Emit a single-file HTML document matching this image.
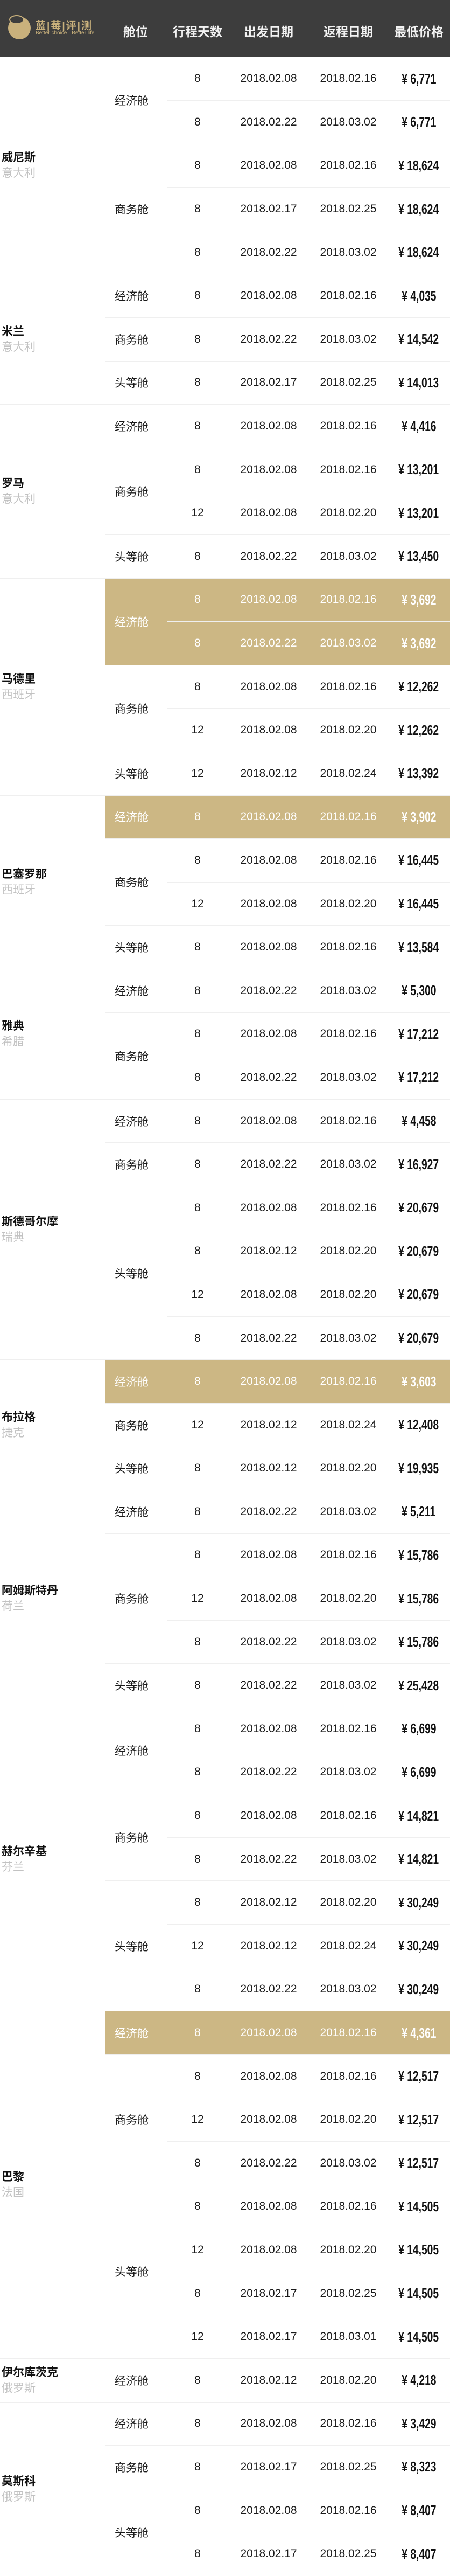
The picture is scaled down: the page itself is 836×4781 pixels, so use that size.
<!DOCTYPE html>
<html><head><meta charset="utf-8">
<style>
*{margin:0;padding:0;box-sizing:border-box}
body{width:836px;height:4781px;background:#fff;font-family:"Liberation Sans","Noto Sans CJK SC",sans-serif;overflow:hidden}
.hd{height:106px;background:#3d3d3d;position:relative;color:#fff}
.hd .lg{position:absolute;left:15px;top:31px;width:42px;height:42px;border-radius:50%;background:#c9b17c}
.hd .lg:after{content:"";position:absolute;left:2px;top:-3px;width:24px;height:13px;border-radius:50%;background:#3d3d3d;border:2px solid #c9b17c}
.hd .bt{position:absolute;left:66px;top:33px;font-size:19px;color:#c9b17c;font-weight:bold;letter-spacing:2px;white-space:nowrap}
.hd .bs{position:absolute;left:66px;top:56px;font-size:10px;color:#c9b17c;white-space:nowrap}
.hd .h{position:absolute;top:40px;font-size:23px;font-weight:bold;transform:translateX(-50%);white-space:nowrap;color:#f2f2f2}
table{border-collapse:collapse;table-layout:fixed;width:836px}
td{border-top:1px solid #efefef;height:80.6px;vertical-align:middle;font-size:21px;color:#1a1a1a}
tr:first-child td{border-top:none}
td.c{padding-left:3px;line-height:29px}
td.c b{display:block;font-size:21px;color:#111}
td.c i{display:block;font-style:normal;color:#c2c2c2;font-size:21px}
td.k{padding-left:18px}
td.n,td.t,td.p{text-align:center}
td.p span{display:inline-block;font-weight:bold;font-size:26px;transform:scaleX(0.74);white-space:nowrap;color:#111}
tr.h td.k,tr.h td.n,tr.h td.t,tr.h td.p,td.k.h{background:#ccb784;color:#fff}
tr.h td.p span{color:#fff}
</style></head><body>
<div class="hd">
<div class="lg"></div>
<div class="bt">蓝|莓|评|测</div>
<div class="bs">Better choice · Better life</div>
<div class="h" style="left:252px">舱位</div>
<div class="h" style="left:367px">行程天数</div>
<div class="h" style="left:499px">出发日期</div>
<div class="h" style="left:647px">返程日期</div>
<div class="h" style="left:778px">最低价格</div>
</div>
<table>
<colgroup><col style="width:195px"><col style="width:115px"><col style="width:114px"><col style="width:150px"><col style="width:146px"><col style="width:116px"></colgroup>
<!-- Venice -->
<tr><td class="c" rowspan="5"><b>威尼斯</b><i>意大利</i></td><td class="k" rowspan="2">经济舱</td><td class="n">8</td><td class="t">2018.02.08</td><td class="t">2018.02.16</td><td class="p"><span>¥ 6,771</span></td></tr>
<tr><td class="n">8</td><td class="t">2018.02.22</td><td class="t">2018.03.02</td><td class="p"><span>¥ 6,771</span></td></tr>
<tr><td class="k" rowspan="3">商务舱</td><td class="n">8</td><td class="t">2018.02.08</td><td class="t">2018.02.16</td><td class="p"><span>¥ 18,624</span></td></tr>
<tr><td class="n">8</td><td class="t">2018.02.17</td><td class="t">2018.02.25</td><td class="p"><span>¥ 18,624</span></td></tr>
<tr><td class="n">8</td><td class="t">2018.02.22</td><td class="t">2018.03.02</td><td class="p"><span>¥ 18,624</span></td></tr>
<!-- Milan -->
<tr><td class="c" rowspan="3"><b>米兰</b><i>意大利</i></td><td class="k">经济舱</td><td class="n">8</td><td class="t">2018.02.08</td><td class="t">2018.02.16</td><td class="p"><span>¥ 4,035</span></td></tr>
<tr><td class="k">商务舱</td><td class="n">8</td><td class="t">2018.02.22</td><td class="t">2018.03.02</td><td class="p"><span>¥ 14,542</span></td></tr>
<tr><td class="k">头等舱</td><td class="n">8</td><td class="t">2018.02.17</td><td class="t">2018.02.25</td><td class="p"><span>¥ 14,013</span></td></tr>
<!-- Rome -->
<tr><td class="c" rowspan="4"><b>罗马</b><i>意大利</i></td><td class="k">经济舱</td><td class="n">8</td><td class="t">2018.02.08</td><td class="t">2018.02.16</td><td class="p"><span>¥ 4,416</span></td></tr>
<tr><td class="k" rowspan="2">商务舱</td><td class="n">8</td><td class="t">2018.02.08</td><td class="t">2018.02.16</td><td class="p"><span>¥ 13,201</span></td></tr>
<tr><td class="n">12</td><td class="t">2018.02.08</td><td class="t">2018.02.20</td><td class="p"><span>¥ 13,201</span></td></tr>
<tr><td class="k">头等舱</td><td class="n">8</td><td class="t">2018.02.22</td><td class="t">2018.03.02</td><td class="p"><span>¥ 13,450</span></td></tr>
<!-- Madrid -->
<tr class="h"><td class="c" rowspan="5"><b>马德里</b><i>西班牙</i></td><td class="k h" rowspan="2">经济舱</td><td class="n">8</td><td class="t">2018.02.08</td><td class="t">2018.02.16</td><td class="p"><span>¥ 3,692</span></td></tr>
<tr class="h"><td class="n">8</td><td class="t">2018.02.22</td><td class="t">2018.03.02</td><td class="p"><span>¥ 3,692</span></td></tr>
<tr><td class="k" rowspan="2">商务舱</td><td class="n">8</td><td class="t">2018.02.08</td><td class="t">2018.02.16</td><td class="p"><span>¥ 12,262</span></td></tr>
<tr><td class="n">12</td><td class="t">2018.02.08</td><td class="t">2018.02.20</td><td class="p"><span>¥ 12,262</span></td></tr>
<tr><td class="k">头等舱</td><td class="n">12</td><td class="t">2018.02.12</td><td class="t">2018.02.24</td><td class="p"><span>¥ 13,392</span></td></tr>
<!-- Barcelona -->
<tr class="h"><td class="c" rowspan="4"><b>巴塞罗那</b><i>西班牙</i></td><td class="k">经济舱</td><td class="n">8</td><td class="t">2018.02.08</td><td class="t">2018.02.16</td><td class="p"><span>¥ 3,902</span></td></tr>
<tr><td class="k" rowspan="2">商务舱</td><td class="n">8</td><td class="t">2018.02.08</td><td class="t">2018.02.16</td><td class="p"><span>¥ 16,445</span></td></tr>
<tr><td class="n">12</td><td class="t">2018.02.08</td><td class="t">2018.02.20</td><td class="p"><span>¥ 16,445</span></td></tr>
<tr><td class="k">头等舱</td><td class="n">8</td><td class="t">2018.02.08</td><td class="t">2018.02.16</td><td class="p"><span>¥ 13,584</span></td></tr>
<!-- Athens -->
<tr><td class="c" rowspan="3"><b>雅典</b><i>希腊</i></td><td class="k">经济舱</td><td class="n">8</td><td class="t">2018.02.22</td><td class="t">2018.03.02</td><td class="p"><span>¥ 5,300</span></td></tr>
<tr><td class="k" rowspan="2">商务舱</td><td class="n">8</td><td class="t">2018.02.08</td><td class="t">2018.02.16</td><td class="p"><span>¥ 17,212</span></td></tr>
<tr><td class="n">8</td><td class="t">2018.02.22</td><td class="t">2018.03.02</td><td class="p"><span>¥ 17,212</span></td></tr>
<!-- Stockholm -->
<tr><td class="c" rowspan="6"><b>斯德哥尔摩</b><i>瑞典</i></td><td class="k">经济舱</td><td class="n">8</td><td class="t">2018.02.08</td><td class="t">2018.02.16</td><td class="p"><span>¥ 4,458</span></td></tr>
<tr><td class="k">商务舱</td><td class="n">8</td><td class="t">2018.02.22</td><td class="t">2018.03.02</td><td class="p"><span>¥ 16,927</span></td></tr>
<tr><td class="k" rowspan="4">头等舱</td><td class="n">8</td><td class="t">2018.02.08</td><td class="t">2018.02.16</td><td class="p"><span>¥ 20,679</span></td></tr>
<tr><td class="n">8</td><td class="t">2018.02.12</td><td class="t">2018.02.20</td><td class="p"><span>¥ 20,679</span></td></tr>
<tr><td class="n">12</td><td class="t">2018.02.08</td><td class="t">2018.02.20</td><td class="p"><span>¥ 20,679</span></td></tr>
<tr><td class="n">8</td><td class="t">2018.02.22</td><td class="t">2018.03.02</td><td class="p"><span>¥ 20,679</span></td></tr>
<!-- Prague -->
<tr class="h"><td class="c" rowspan="3"><b>布拉格</b><i>捷克</i></td><td class="k">经济舱</td><td class="n">8</td><td class="t">2018.02.08</td><td class="t">2018.02.16</td><td class="p"><span>¥ 3,603</span></td></tr>
<tr><td class="k">商务舱</td><td class="n">12</td><td class="t">2018.02.12</td><td class="t">2018.02.24</td><td class="p"><span>¥ 12,408</span></td></tr>
<tr><td class="k">头等舱</td><td class="n">8</td><td class="t">2018.02.12</td><td class="t">2018.02.20</td><td class="p"><span>¥ 19,935</span></td></tr>
<!-- Amsterdam -->
<tr><td class="c" rowspan="5"><b>阿姆斯特丹</b><i>荷兰</i></td><td class="k">经济舱</td><td class="n">8</td><td class="t">2018.02.22</td><td class="t">2018.03.02</td><td class="p"><span>¥ 5,211</span></td></tr>
<tr><td class="k" rowspan="3">商务舱</td><td class="n">8</td><td class="t">2018.02.08</td><td class="t">2018.02.16</td><td class="p"><span>¥ 15,786</span></td></tr>
<tr><td class="n">12</td><td class="t">2018.02.08</td><td class="t">2018.02.20</td><td class="p"><span>¥ 15,786</span></td></tr>
<tr><td class="n">8</td><td class="t">2018.02.22</td><td class="t">2018.03.02</td><td class="p"><span>¥ 15,786</span></td></tr>
<tr><td class="k">头等舱</td><td class="n">8</td><td class="t">2018.02.22</td><td class="t">2018.03.02</td><td class="p"><span>¥ 25,428</span></td></tr>
<!-- Helsinki -->
<tr><td class="c" rowspan="7"><b>赫尔辛基</b><i>芬兰</i></td><td class="k" rowspan="2">经济舱</td><td class="n">8</td><td class="t">2018.02.08</td><td class="t">2018.02.16</td><td class="p"><span>¥ 6,699</span></td></tr>
<tr><td class="n">8</td><td class="t">2018.02.22</td><td class="t">2018.03.02</td><td class="p"><span>¥ 6,699</span></td></tr>
<tr><td class="k" rowspan="2">商务舱</td><td class="n">8</td><td class="t">2018.02.08</td><td class="t">2018.02.16</td><td class="p"><span>¥ 14,821</span></td></tr>
<tr><td class="n">8</td><td class="t">2018.02.22</td><td class="t">2018.03.02</td><td class="p"><span>¥ 14,821</span></td></tr>
<tr><td class="k" rowspan="3">头等舱</td><td class="n">8</td><td class="t">2018.02.12</td><td class="t">2018.02.20</td><td class="p"><span>¥ 30,249</span></td></tr>
<tr><td class="n">12</td><td class="t">2018.02.12</td><td class="t">2018.02.24</td><td class="p"><span>¥ 30,249</span></td></tr>
<tr><td class="n">8</td><td class="t">2018.02.22</td><td class="t">2018.03.02</td><td class="p"><span>¥ 30,249</span></td></tr>
<!-- Paris -->
<tr class="h"><td class="c" rowspan="8"><b>巴黎</b><i>法国</i></td><td class="k">经济舱</td><td class="n">8</td><td class="t">2018.02.08</td><td class="t">2018.02.16</td><td class="p"><span>¥ 4,361</span></td></tr>
<tr><td class="k" rowspan="3">商务舱</td><td class="n">8</td><td class="t">2018.02.08</td><td class="t">2018.02.16</td><td class="p"><span>¥ 12,517</span></td></tr>
<tr><td class="n">12</td><td class="t">2018.02.08</td><td class="t">2018.02.20</td><td class="p"><span>¥ 12,517</span></td></tr>
<tr><td class="n">8</td><td class="t">2018.02.22</td><td class="t">2018.03.02</td><td class="p"><span>¥ 12,517</span></td></tr>
<tr><td class="k" rowspan="4">头等舱</td><td class="n">8</td><td class="t">2018.02.08</td><td class="t">2018.02.16</td><td class="p"><span>¥ 14,505</span></td></tr>
<tr><td class="n">12</td><td class="t">2018.02.08</td><td class="t">2018.02.20</td><td class="p"><span>¥ 14,505</span></td></tr>
<tr><td class="n">8</td><td class="t">2018.02.17</td><td class="t">2018.02.25</td><td class="p"><span>¥ 14,505</span></td></tr>
<tr><td class="n">12</td><td class="t">2018.02.17</td><td class="t">2018.03.01</td><td class="p"><span>¥ 14,505</span></td></tr>
<!-- Irkutsk -->
<tr><td class="c"><b>伊尔库茨克</b><i>俄罗斯</i></td><td class="k">经济舱</td><td class="n">8</td><td class="t">2018.02.12</td><td class="t">2018.02.20</td><td class="p"><span>¥ 4,218</span></td></tr>
<!-- Moscow -->
<tr><td class="c" rowspan="4"><b>莫斯科</b><i>俄罗斯</i></td><td class="k">经济舱</td><td class="n">8</td><td class="t">2018.02.08</td><td class="t">2018.02.16</td><td class="p"><span>¥ 3,429</span></td></tr>
<tr><td class="k">商务舱</td><td class="n">8</td><td class="t">2018.02.17</td><td class="t">2018.02.25</td><td class="p"><span>¥ 8,323</span></td></tr>
<tr><td class="k" rowspan="2">头等舱</td><td class="n">8</td><td class="t">2018.02.08</td><td class="t">2018.02.16</td><td class="p"><span>¥ 8,407</span></td></tr>
<tr><td class="n">8</td><td class="t">2018.02.17</td><td class="t">2018.02.25</td><td class="p"><span>¥ 8,407</span></td></tr>
</table>
</body></html>
